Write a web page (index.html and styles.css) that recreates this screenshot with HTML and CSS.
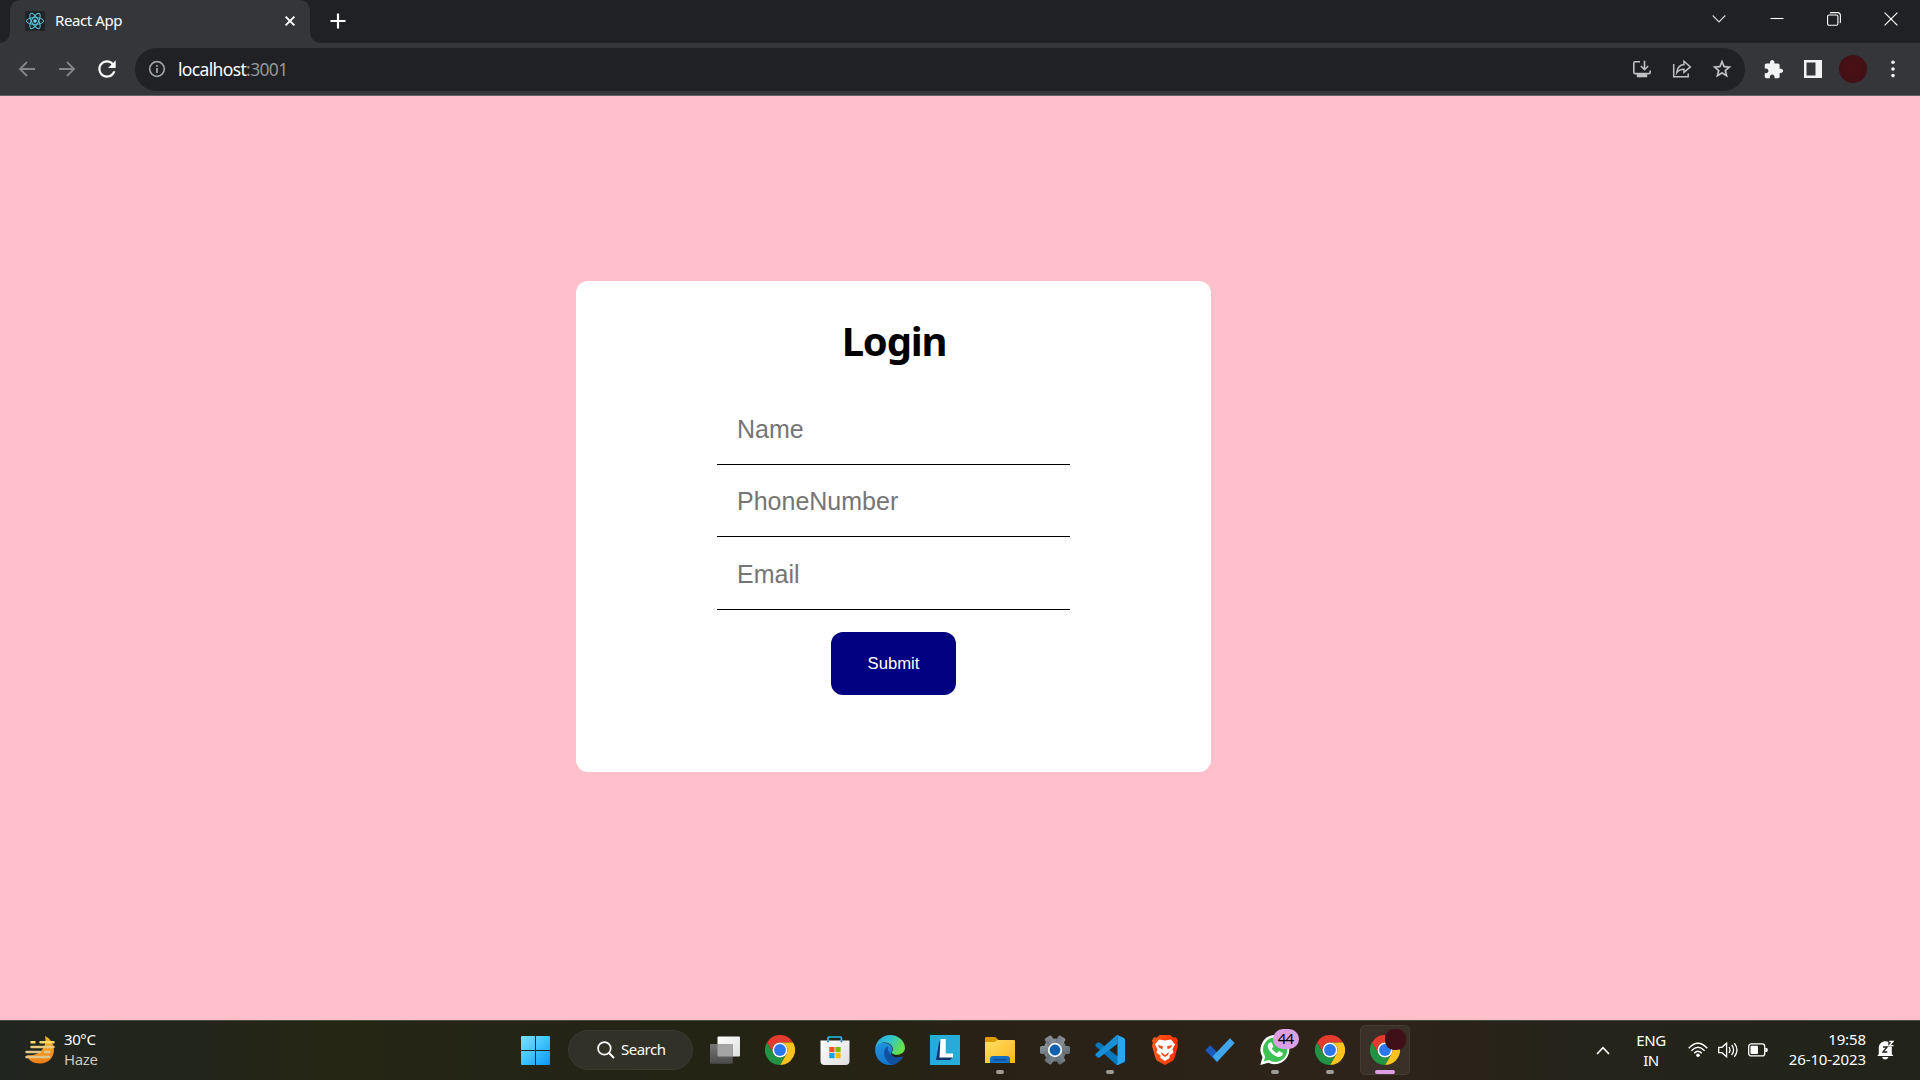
FILE: index.html
```html
<!DOCTYPE html>
<html lang="en">
<head>
<meta charset="utf-8">
<title>React App</title>
<link rel="stylesheet" href="styles.css">
</head>
<body>
<svg class="defs" aria-hidden="true">
  <defs>
    <symbol id="chrome" viewBox="0 0 48 48">
      <path fill="#e33b2e" d="M3.2 12A24 24 0 0 1 44.8 12H24A12 12 0 0 0 13.6 30Z"/>
      <path fill="#fcc31e" d="M44.8 12A24 24 0 0 1 24 48L34.4 30A12 12 0 0 0 24 12Z"/>
      <path fill="#229342" d="M24 48A24 24 0 0 1 3.2 12L13.6 30A12 12 0 0 0 34.4 30Z"/>
      <circle cx="24" cy="24" r="12" fill="#fff"/>
      <circle cx="24" cy="24" r="9.5" fill="#2c77ee"/>
    </symbol>
    <linearGradient id="win" gradientUnits="userSpaceOnUse" x1="0" y1="0" x2="29" y2="29"><stop offset="0" stop-color="#80e0ff"/><stop offset=".5" stop-color="#3fc3fc"/><stop offset="1" stop-color="#0a95f8"/></linearGradient>
    <linearGradient id="light" x1="0" y1="0" x2="1" y2="1"><stop offset="0" stop-color="#fff"/><stop offset="1" stop-color="#dedede"/></linearGradient>
    <linearGradient id="dark" x1="0" y1="0" x2="0" y2="1"><stop offset="0" stop-color="#777"/><stop offset="1" stop-color="#4b4b4b"/></linearGradient>
    <linearGradient id="folder" x1="0" y1="0" x2="1" y2="1"><stop offset="0" stop-color="#ffdf6b"/><stop offset="1" stop-color="#fcb711"/></linearGradient>
    <linearGradient id="moon" x1="0" y1="0" x2="0" y2="1"><stop offset="0" stop-color="#f8b832"/><stop offset="1" stop-color="#f07d15"/></linearGradient>
    <linearGradient id="edgeTop" x1="0" y1="0" x2="1" y2=".4"><stop offset="0" stop-color="#2aa5e0"/><stop offset=".5" stop-color="#2fc3d0"/><stop offset="1" stop-color="#66e04c"/></linearGradient>
    <linearGradient id="edgeLeft" x1="0" y1="0" x2=".5" y2="1"><stop offset="0" stop-color="#2196dc"/><stop offset="1" stop-color="#0f72d0"/></linearGradient>
    <linearGradient id="gear" x1="0" y1="0" x2="1" y2="1"><stop offset="0" stop-color="#8d959c"/><stop offset="1" stop-color="#606970"/></linearGradient>
    <linearGradient id="brave" x1="0" y1="0" x2="1" y2="0"><stop offset="0" stop-color="#ff5a1c"/><stop offset="1" stop-color="#f92f06"/></linearGradient>
  </defs>
</svg>

<header class="browser">
  <div class="tabstrip">
    <div class="tab">
      <svg class="favicon" viewBox="0 0 20 20" width="20" height="20"><rect width="20" height="20" rx="1.5" fill="#202426"/><g fill="none" stroke="#58c4dc" stroke-width="1"><ellipse cx="10" cy="10" rx="8.6" ry="3.4"/><ellipse cx="10" cy="10" rx="8.6" ry="3.4" transform="rotate(60 10 10)"/><ellipse cx="10" cy="10" rx="8.6" ry="3.4" transform="rotate(120 10 10)"/></g><circle cx="10" cy="10" r="1.8" fill="#61dafb"/></svg>
      <span class="tab-title">React App</span>
      <svg class="tab-close" viewBox="0 0 12 12" width="12" height="12"><path d="M1.6 1.6l8.8 8.8M10.4 1.6l-8.8 8.8" stroke="#fff" stroke-width="1.9"/></svg>
    </div>
    <svg class="new-tab" viewBox="0 0 16 16" width="16" height="16"><path d="M8 .5v15M.5 8h15" stroke="#fff" stroke-width="2.2"/></svg>
    <div class="window-buttons">
      <span><svg viewBox="0 0 14 14" width="14" height="14"><path d="M.7 3.5L7 9.9l6.3-6.4" fill="none" stroke="#d8d8d8" stroke-width="1.1"/></svg></span>
      <span><svg viewBox="0 0 14 14" width="14" height="14"><path d="M.5 6.5h13" stroke="#fff" stroke-width="1.1"/></svg></span>
      <span><svg viewBox="0 0 14 14" width="14" height="14"><g fill="none" stroke="#fff" stroke-width="1.1"><rect x=".6" y="3" width="10.3" height="10.3" rx="1.5"/><path d="M3 1.1Q3.3.6 4.5.6H10.500q2.900 0 2.900 3V9.500q0 1.200-.6 1.500"/></g></svg></span>
      <span><svg viewBox="0 0 14 14" width="14" height="14"><path d="M.6.6l12.800 12.800M13.400.6L.6 13.400" stroke="#fff" stroke-width="1.2"/></svg></span>
    </div>
  </div>
  <div class="toolbar">
    <span class="tool"><svg viewBox="0 0 18 18" width="18" height="18"><path d="M17 9H2M9 2L2 9l7 7" fill="none" stroke="#84868a" stroke-width="1.8"/></svg></span>
    <span class="tool"><svg viewBox="0 0 18 18" width="18" height="18"><path d="M1 9h15M9 2l7 7-7 7" fill="none" stroke="#84868a" stroke-width="1.8"/></svg></span>
    <span class="tool"><svg viewBox="0 0 24 24" width="26" height="26"><path fill="#fff" d="M17.650 6.350C16.200 4.900 14.210 4 12 4c-4.420 0-7.990 3.580-7.990 8s3.570 8 7.990 8c3.730 0 6.840-2.550 7.730-6h-2.080c-.82 2.330-3.040 4-5.650 4-3.310 0-6-2.690-6-6s2.690-6 6-6c1.660 0 3.140.69 4.220 1.780L13 11h7V4l-2.350 2.350z"/></svg></span>
    <div class="omnibox">
      <svg class="info" viewBox="0 0 18 18" width="18" height="18"><circle cx="9" cy="9" r="7.300" fill="none" stroke="#9aa0a6" stroke-width="1.700"/><path d="M9 8v5M9 5v1.800" stroke="#9aa0a6" stroke-width="1.800"/></svg>
      <span class="url">localhost<span class="port">:3001</span></span>
      <span class="tool"><svg viewBox="0 0 20 20" width="20" height="20"><g fill="none" stroke="#bfc1c3" stroke-width="1.600"><path d="M8 2.800H3.200Q1.800 2.800 1.800 4.200V13.200Q1.800 14.600 3.200 14.600H16.800Q18.200 14.600 18.200 13.200V11.500"/><path d="M12.500 1.800v8.600M8.800 7l3.700 3.700L16.200 7"/></g><path fill="#bfc1c3" d="M4.800 15h10.400v3.300H4.800z"/></svg></span>
      <span class="tool"><svg viewBox="0 0 20 20" width="20" height="20"><g fill="none" stroke="#bfc1c3" stroke-width="1.500"><path d="M1.700 5V17.800H16.200V14.500"/><path d="M12 2.300L18.300 7.900 12 13.300V10.200C8.500 10.200 6.300 11.400 4.800 13.600 5.200 9.300 7.800 6 12 5.500Z"/></g></svg></span>
      <span class="tool"><svg viewBox="0 0 24 24" width="22" height="22"><path fill="#c6c8ca" stroke="#c6c8ca" stroke-width=".3" d="M22 9.240l-7.190-.62L12 2 9.190 8.630 2 9.240l5.460 4.730L5.820 21 12 17.270 18.180 21l-1.630-7.030L22 9.240zM12 15.400l-3.760 2.270 1-4.280-3.320-2.880 4.380-.38L12 6.100l1.710 4.040 4.380.38-3.320 2.880 1 4.280L12 15.400z"/></svg></span>
    </div>
    <div class="extensions">
      <span class="tool"><svg viewBox="0 0 24 24" width="21" height="21"><path fill="#f1f3f4" d="M20.500 11H19V7c0-1.100-.9-2-2-2h-4V3.500C13 2.120 11.880 1 10.500 1S8 2.120 8 3.500V5H4c-1.100 0-1.990.9-1.990 2v3.800H3.500c1.490 0 2.700 1.210 2.700 2.700s-1.210 2.700-2.700 2.700H2V20c0 1.100.9 2 2 2h3.800v-1.500c0-1.490 1.210-2.700 2.700-2.700 1.490 0 2.700 1.210 2.700 2.700V22H17c1.100 0 2-.9 2-2v-4h1.500c1.380 0 2.500-1.120 2.500-2.500S21.880 11 20.500 11z"/></svg></span>
      <span class="tool"><svg viewBox="0 0 18 18" width="18" height="18"><path fill="#f1f3f4" fill-rule="evenodd" d="M0 0h18v18H0zM2.500 2.500v13H11.500v-13z"/></svg></span>
      <span class="tool"><span class="avatar"></span></span>
      <span class="tool"><svg viewBox="0 0 4 18" width="4" height="18"><g fill="#f1f3f4"><circle cx="2" cy="2.200" r="1.800"/><circle cx="2" cy="9" r="1.800"/><circle cx="2" cy="15.600" r="1.800"/></g></svg></span>
    </div>
  </div>
</header>

<main class="page">
  <form class="card">
    <h1 class="title">Login</h1>
    <input class="field" type="text" placeholder="Name">
    <input class="field field-phone" type="text" placeholder="PhoneNumber">
    <input class="field" type="text" placeholder="Email">
    <button class="submit" type="button">Submit</button>
  </form>
</main>

<footer class="taskbar">
  <div class="weather">
    <svg viewBox="0 0 30 30" width="30" height="30"><path fill="url(#moon)" d="M20 1C33 7 32 28 15 28.500 8 28.500 3 25 2 20 12 22 23 14 20 1Z"/><g stroke-width="2.500" stroke-linecap="round" fill="none"><path stroke="#fbd765" d="M6.500 7.200H9.500M15.500 7.200H28.500"/><path stroke="#e8ca7c" d="M6.500 12H28.500"/><path stroke="#dec68a" d="M1.500 17H15M20 17H24M1.500 22H24"/></g></svg>
    <div class="two-line"><span>30°C</span><span class="muted">Haze</span></div>
  </div>

  <nav class="apps">
    <span class="app"><svg viewBox="0 0 29 29" width="29" height="29"><path fill="url(#win)" d="M1 0H14V14H0V1Q0 0 1 0ZM15 0H28Q29 0 29 1V14H15ZM0 15H14V29H1Q0 29 0 28ZM15 15H29V28Q29 29 28 29H15Z"/></svg></span>
    <span class="search"><svg viewBox="0 0 18 18" width="18" height="18"><circle cx="7.400" cy="7.400" r="6.300" fill="none" stroke="#fff" stroke-width="1.700"/><path d="M11.800 11.800L17 17" stroke="#fff" stroke-width="2"/></svg><span class="search-label">Search</span></span>
    <span class="app"><svg viewBox="0 0 30 30" width="30" height="30"><rect x="7.500" y="1.500" width="22.500" height="20" rx="1" fill="url(#light)"/><rect x="0" y="9" width="22.700" height="19.700" rx="1" fill="url(#dark)"/><path fill="#a5a5a5" d="M7.500 9H21.700Q22.700 9 22.700 10V21.500H8.500Q7.500 21.500 7.500 20.500Z"/></svg></span>
    <span class="app"><svg width="30" height="30"><use href="#chrome"/></svg></span>
    <span class="app"><svg viewBox="0 0 30 30" width="30" height="30"><path d="M8 6.500V2.800Q8 2 8.800 2H20.600Q21.400 2 21.400 2.800V6.500" fill="none" stroke="#2cbbe8" stroke-width="1.700"/><path fill="url(#light)" d="M.5 5.500H29.500V26Q29.500 30 25.500 30H4.500Q.5 30 .5 26Z"/><path d="M8 5.500v1.800M21.400 5.500v1.800" stroke="#0c6da5" stroke-width="1.700"/><path fill="#f25022" d="M9.300 12h5.200v5.200H9.300z"/><path fill="#7fba00" d="M15.400 12h5.200v5.200h-5.200z"/><path fill="#00a4ef" d="M9.300 18h5.200v5.200H9.300z"/><path fill="#ffb900" d="M15.400 18h5.200v5.200h-5.200z"/></svg></span>
    <span class="app"><svg viewBox="0 0 30 30" width="30" height="30"><path fill="url(#edgeLeft)" d="M.3 13C1 8 6 7 11 8c5 1 7 4 6 8-3 5 2 9 11 5.500C25 27 20 30 15 30 6 30-1 22 .3 13Z"/><path fill="#124f9c" d="M12.500 11C7 15 8 25 17 29.700 22 29 26.500 25.500 28 21.500 19 24.500 12.500 19.500 12.500 11Z"/><path fill="url(#edgeTop)" d="M.3 13C1.500 5.500 7.500 0 15 0c9 0 15 6.500 15 13 0 7-11 8.500-13 5-.5-1.500 1-2 .8-4.300C17.500 6.500 4.500 4.500.3 13Z"/></svg></span>
    <span class="app"><svg viewBox="0 0 30 30" width="30" height="30"><path fill="#27acd9" d="M0 0h30v30H0z"/><path fill="#12316f" d="M9.500 5L6 25H20L23 22H12Z"/><path fill="#fff" d="M10.500 4H15.700V18.500H23V22.500H9.500Z"/></svg></span>
    <span class="app running"><svg viewBox="0 0 30 30" width="30" height="30"><path fill="#dd9b06" d="M0 3.200Q0 2 1.200 2H9.500Q10.500 2 11.200 2.800L13.500 5H28Q29 5 29 6V12H0Z"/><path fill="url(#folder)" d="M0 7H9.500L12.500 5H29Q30 5 30 6V28H0Z"/><path fill="#146fc3" d="M5 28V24Q5 21 8 21H22Q25 21 25 24V28Z"/><path d="M8.500 24.700H21.500" stroke="#074a91" stroke-width="1.300"/></svg></span>
    <span class="app"><svg viewBox="0 0 30 30" width="30" height="30"><g fill="url(#gear)"><circle cx="15" cy="15" r="11.500"/><rect x="0" y="11" width="30" height="8" rx="1.700"/><rect x="0" y="11" width="30" height="8" rx="1.700" transform="rotate(60 15 15)"/><rect x="0" y="11" width="30" height="8" rx="1.700" transform="rotate(120 15 15)"/></g><circle cx="15" cy="15" r="6.300" fill="#1160b0" stroke="#eef2f5" stroke-width="1.800"/></svg></span>
    <span class="app running"><svg viewBox="0 0 30 30" width="30" height="30"><path fill="#0877bd" d="M1 11.500Q-.3 10.300 1 9L2.800 7.500Q3.500 7 4.500 7.600L30 27 21.500 30Z"/><path fill="#198fd8" d="M1 18.500Q-.3 19.700 1 21L2.800 22.500Q3.500 23 4.500 22.400L22.500 8.700V0L21 .8Z"/><path fill="#2aa6f0" d="M21.500 30Q22.500 29 22.500 28V2Q22.500 1 21.500 0H22.500L29 3Q30 3.600 30 4.500V25.500Q30 26.500 29 27L22.800 30Z"/></svg></span>
    <span class="app"><svg viewBox="0 0 30 30" width="30" height="30"><path fill="url(#brave)" d="M9.500 0H20.500L23 2.500 26 2.300 28 5.500 27.200 8 28 11 24.500 23Q24 25 22.500 26L15 30 7.500 26Q6 25 5.500 23L2 11 2.800 8 2 5.500 4 2.300 7 2.500Z"/><path fill="#fff" d="M9 4.500L15 5.500 21 4.500 25 9.500 22.500 14 23.500 17.500 19.500 20.500 19.700 23 15 26 10.300 23 10.500 20.500 6.500 17.500 7.500 14 5 9.500Z"/><path fill="#fb481b" d="M8 10L13 11.200 12.300 14.500 9 12.500ZM22 10L17 11.200 17.700 14.500 21 12.500ZM11 17L15 20 19 17 18 20 15 22 12 20Z"/></svg></span>
    <span class="app"><svg viewBox="0 0 30 30" width="30" height="30"><path fill="#185abd" d="M.4 15.500L5 10.300 15.500 20.500 12 27Z"/><path fill="#41a5ee" d="M25 3.300L29.700 8 12 27 7.500 21.500Z"/></svg></span>
    <span class="app running"><svg viewBox="0 0 30 30" width="30" height="30"><path fill="#fff" d="M15.200 0A14.600 14.600 0 1 1 8.500 27.800L.3 30 2.500 22.200A14.700 14.700 0 0 1 15.200 0Z"/><path fill="#3cc152" d="M15.200 2.500A12.200 12.200 0 1 1 8.800 25.100L3.800 26.400 5.200 21.600A12.200 12.200 0 0 1 15.200 2.500Z"/><path fill="#fff" d="M10.200 7.500h1.500l1.700 4-1.500 2.100c1.100 2.300 2.800 3.700 5.100 4.600l1.900-2.300 3.900 2c.2 2.500-1.500 4-4 4C14 21.500 8 15.700 7.700 11.300 7.700 9.500 8.700 8 10.200 7.500Z"/></svg><span class="badge">44</span></span>
    <span class="app running"><svg width="30" height="30"><use href="#chrome"/></svg></span>
    <span class="app active"><svg width="30" height="30"><use href="#chrome"/></svg><span class="profile"></span></span>
  </nav>

  <div class="tray">
    <svg viewBox="0 0 14 9" width="14" height="9"><path d="M1 8L7 1.700 13 8" fill="none" stroke="#fff" stroke-width="1.700"/></svg>
    <div class="two-line lang"><span>ENG</span><span>IN</span></div>
    <div class="status">
      <svg viewBox="0 0 20 16" width="20" height="16"><g fill="none" stroke="#fff" stroke-width="1.400"><path d="M.7 6.200Q10-3.800 19.300 6.200M3.400 8.700Q10 1.800 16.600 8.700M6.200 11.300Q10 7.300 13.800 11.300"/></g><circle cx="10" cy="13.300" r="1.800" fill="#fff"/></svg>
      <svg viewBox="0 0 20 16" width="20" height="16"><g fill="none" stroke="#fff" stroke-width="1.300"><path d="M.7 5.300H4L8.600 1.200V14.800L4 10.700H.7Z"/><path d="M11 5Q13 8 11 11M13.700 3Q17.500 8 13.700 13M16.300 1.200Q21.700 8 16.300 14.800"/></g></svg>
      <svg viewBox="0 0 20 14" width="20" height="14"><rect x=".7" y=".9" width="16" height="12" rx="2.500" fill="none" stroke="#fff" stroke-width="1.300"/><rect x="2.500" y="2.800" width="7.500" height="8.200" rx="1" fill="#fff"/><path d="M17.300 5H18.500Q19.800 5 19.800 7T18.500 9H17.300Z" fill="#fff"/></svg>
    </div>
    <div class="two-line clock"><span>19:58</span><span>26-10-2023</span></div>
    <svg class="bell" viewBox="0 0 18 20" width="18" height="20"><path fill="#fff" d="M1.800 14V8C1.800 3.500 5 1.200 8.500 1.200 9.500 1.200 10.500 1.400 11.300 1.800V6.500H14.800V14L16.300 16H.3ZM5 17H11.500Q10.500 19.500 8.200 19.500T5 17Z"/><path d="M6 7H10L6 12H10.300" fill="none" stroke="#22241b" stroke-width="1.400"/><path d="M12.300 1.500H16L12.300 5.700H16.500" fill="none" stroke="#fff" stroke-width="1.300"/></svg>
  </div>
</footer>
</body>
</html>
```

FILE: styles.css
```css
* { box-sizing: border-box; }

body {
  margin: 0;
  width: 1920px;
  height: 1080px;
  overflow: hidden;
  display: grid;
  grid-template-rows: 96px 924px 60px;
  font-family: "Noto Sans", "Open Sans", sans-serif;
  font-size: 15px;
  color: #fff;
}

svg { display: block; flex: none; }
.defs { position: absolute; width: 0; height: 0; }

/* Browser chrome */
.browser {
  background: #35363a;
  border-bottom: 1px solid #606164;
}

.tabstrip {
  display: flex;
  align-items: center;
  height: 43px;
  padding-left: 10px;
  background: #202124;
}

.tab {
  position: relative;
  display: flex;
  align-items: center;
  width: 300px;
  height: 43px;
  padding: 0 14px 1px 15px;
  background: #35363a;
  border-radius: 10px 10px 0 0;
}

.tab::before,
.tab::after {
  content: "";
  position: absolute;
  bottom: 0;
  width: 10px;
  height: 10px;
}
.tab::before { right: 100%; background: radial-gradient(circle at 0 0, transparent 9.5px, #35363a 10px); }
.tab::after { left: 100%; background: radial-gradient(circle at 100% 0, transparent 9.5px, #35363a 10px); }

.tab-title { margin: 0 0 2px 10px; letter-spacing: -0.4px; line-height: 20px; }
.tab-close { margin-left: auto; }
.new-tab { margin-left: 20px; margin-bottom: 1px; }

.window-buttons { display: flex; margin-left: auto; height: 37px; align-self: flex-start; }
.window-buttons span { display: grid; place-items: center; width: 57.3px; }

.toolbar {
  display: flex;
  align-items: center;
  height: 52px;
  padding: 0 7px;
}
.tool { display: grid; place-items: center; width: 40px; height: 40px; flex: none; }

.omnibox {
  display: flex;
  align-items: center;
  width: 1610px;
  height: 43px;
  margin-left: 8px;
  padding: 0 3px 0 13px;
  background: #202124;
  border-radius: 22px;
}
.url { margin: 0 auto 1px 12px; font-size: 17.5px; line-height: 24px; letter-spacing: -0.65px; }
.port { color: #93969a; }
.extensions { display: flex; margin-left: 8px; }
.avatar { width: 28px; height: 28px; border-radius: 50%; background: radial-gradient(#4c1216, #3c0e14); }

/* Login page */
.page {
  display: flex;
  align-items: flex-start;
  padding: 185px 0 0 576px;
  background: #ffc0cb;
}

.card {
  display: flex;
  flex-direction: column;
  align-items: center;
  width: 635px;
  height: 491px;
  padding-top: 33px;
  background: #fff;
  border-radius: 12px;
}

.title {
  margin: 0 0 24px;
  padding-left: 1px;
  color: #000;
  font-size: 40px;
  font-weight: 700;
  line-height: 54px;
  letter-spacing: -1.2px;
}

.field {
  width: 353px;
  height: 73px;
  padding: 2px 20px 0;
  border: 0;
  border-bottom: 1px solid #000;
  border-radius: 0;
  background: transparent;
  font: 25px "Liberation Sans", sans-serif;
}
.field-phone { height: 72px; }
.field::placeholder { color: #757575; }

.submit {
  width: 125px;
  height: 63px;
  margin-top: 22px;
  border: 0;
  border-radius: 12px;
  background: #000080;
  color: #fff;
  font: 16.67px "Liberation Sans", sans-serif;
}

/* Taskbar */
.taskbar {
  display: flex;
  align-items: center;
  padding-bottom: 1px;
  border-top: 1px solid #4a4a3e;
  background: linear-gradient(90deg, #21251f 0, #22251b 180px, #262614 330px, #232516 500px, #242314 800px, #2b2217 1120px, #2d231a 1400px, #24241a 1600px, #21231a 1920px);
}

.weather { display: flex; align-items: center; width: 508px; padding-left: 25px; gap: 9px; }
.two-line { display: flex; flex-direction: column; margin-bottom: 3px; line-height: 20px; letter-spacing: -0.4px; }
.muted { color: #c9c9c4; }

.apps { display: flex; align-items: center; }
.app { position: relative; display: grid; place-items: center; width: 55px; height: 50px; }
.running::after {
  content: "";
  position: absolute;
  bottom: 1px;
  width: 8px;
  height: 4px;
  border-radius: 2px;
  background: #9d9b94;
}
.search {
  display: flex;
  align-items: center;
  gap: 6px;
  width: 125px;
  height: 40px;
  margin: 0 4.5px 0 5px;
  padding-left: 28px;
  border: 1px solid #393930;
  border-radius: 20px;
  background: #313127;
  letter-spacing: -0.5px;
}
.search-label { margin-bottom: 2px; line-height: 20px; }
.badge {
  position: absolute;
  left: 25px;
  top: 4px;
  width: 26px;
  height: 20px;
  border-radius: 10px;
  background: #dc9fe4;
  color: #000;
  line-height: 19px;
  text-align: center;
  letter-spacing: -0.8px;
}
.active {
  width: 50px;
  margin-left: 2.5px;
  border: 1px solid #453c33;
  border-radius: 5px;
  background: #3a3028;
}
.active::after {
  content: "";
  position: absolute;
  bottom: 0;
  width: 20px;
  height: 4px;
  border-radius: 2px;
  background: #dc9fe4;
}
.profile {
  position: absolute;
  right: 3px;
  top: 3px;
  width: 21px;
  height: 21px;
  border-radius: 9px;
  background: #3f1017;
}

.tray { display: flex; align-items: center; margin-left: auto; padding-right: 25px; }
.lang { width: 68px; margin: 0 0 1px 7px; align-items: center; }
.status { display: flex; align-items: center; gap: 10px; margin-left: 3px; }
.clock { width: 98px; align-items: flex-end; letter-spacing: -0.1px; }
.bell { margin-left: 11px; }
```
